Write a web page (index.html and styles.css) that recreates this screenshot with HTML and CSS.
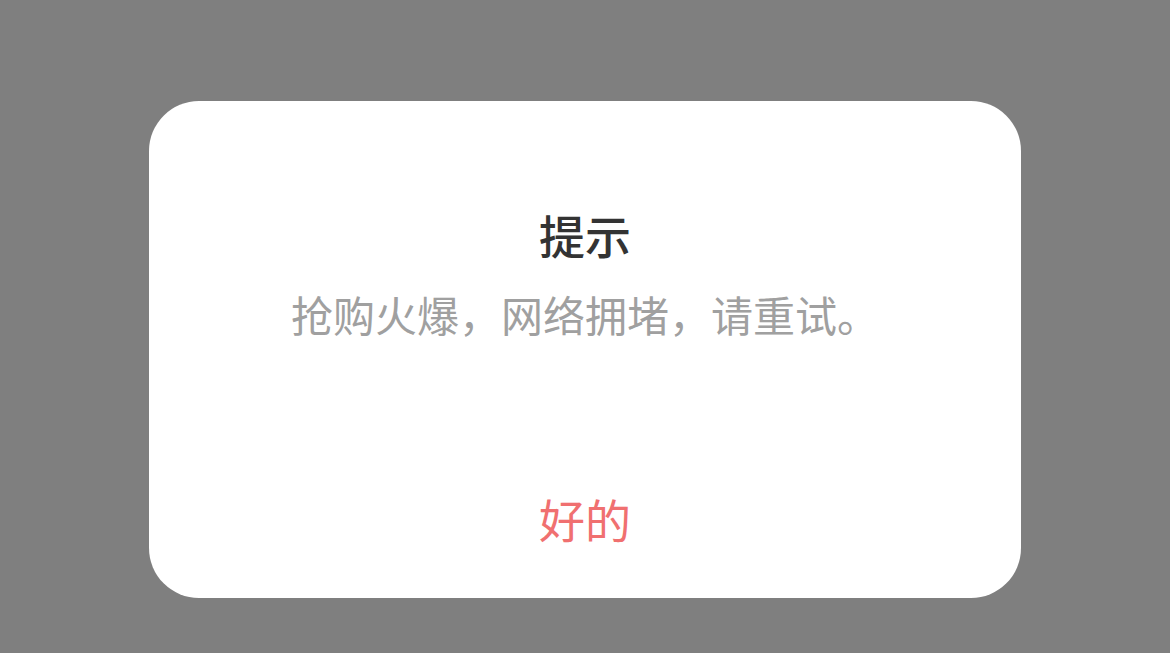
FILE: index.html
```html
<!DOCTYPE html>
<html lang="zh-CN">
<head>
<meta charset="utf-8">
<link rel="stylesheet" href="styles.css">
</head>
<body>
<div class="overlay">
  <div class="dialog">
    <div class="title">提示</div>
    <div class="message">抢购火爆，网络拥堵，请重试。</div>
    <div class="button">好的</div>
  </div>
</div>
</body>
</html>
```
FILE: styles.css
```css
html, body {
  margin: 0;
  padding: 0;
  width: 1170px;
  height: 653px;
  background: #7f7f7f;
  overflow: hidden;
}
.overlay {
  width: 1170px;
  height: 653px;
  padding-top: 101px;
  box-sizing: border-box;
  display: flex;
  justify-content: center;
  align-items: flex-start;
  font-family: "Noto Sans CJK SC", "Noto Sans", sans-serif;
}
.dialog {
  width: 872px;
  height: 497px;
  box-sizing: border-box;
  background: #ffffff;
  border-radius: 50px;
  display: flex;
  flex-direction: column;
  align-items: center;
  padding-top: 105px;
}
.title {
  font-size: 46px;
  line-height: 56px;
  font-weight: 500;
  color: #333333;
}
.message {
  margin-top: 24px;
  font-size: 42px;
  line-height: 56px;
  color: #a0a0a0;
}
.button {
  margin-top: 148px;
  font-size: 46px;
  line-height: 56px;
  color: #f07070;
}
```
